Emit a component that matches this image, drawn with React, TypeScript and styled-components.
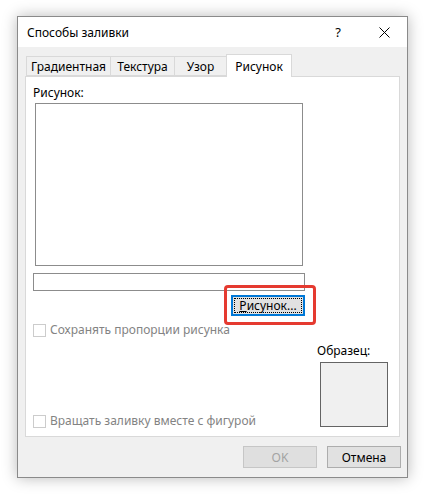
import React from "react";
import styled, { createGlobalStyle } from "styled-components";

const Global = createGlobalStyle`
  html, body { margin: 0; padding: 0; background: #ffffff; }
  body { font-family: "Noto Sans", "Open Sans", sans-serif; font-size: 11px; color: #000; }
  * { box-sizing: border-box; }
`;

const Page = styled.div`
  padding: 16px 0 0 17px;
  height: 500px;
`;

const Window = styled.div`
  width: 391px;
  height: 462px;
  border: 1px solid #8a8a8a;
  background: #f0f0f0;
  box-shadow: 0 0 14px rgba(0, 0, 0, 0.28);
  display: flex;
  flex-direction: column;
`;

const TitleBar = styled.div`
  height: 30px;
  background: #ffffff;
  display: flex;
  align-items: center;
  padding-left: 9px;
`;

const Title = styled.div`
  flex: 1;
  font-size: 12px;
`;

const TitleButton = styled.div`
  width: 46px;
  height: 30px;
  display: flex;
  align-items: center;
  justify-content: center;
  font-size: 13px;
`;

const Body = styled.div`
  flex: 1;
  display: flex;
  flex-direction: column;
  padding: 7px 7px 0 7px;
`;

const TabRow = styled.div`
  display: flex;
  align-items: flex-end;
  height: 22px;
  padding-left: 1px;
  position: relative;
  z-index: 1;
`;

const Tab = styled.div<{ $w: number; $active?: boolean }>`
  width: ${(p) => p.$w}px;
  height: ${(p) => (p.$active ? 23 : 20)}px;
  margin-bottom: ${(p) => (p.$active ? -1 : 0)}px;
  border: 1px solid #d9d9d9;
  border-bottom: ${(p) => (p.$active ? "none" : "1px solid #d9d9d9")};
  margin-left: -1px;
  background: ${(p) => (p.$active ? "#ffffff" : "#f0f0f0")};
  display: flex;
  align-items: ${(p) => (p.$active ? "flex-start" : "center")};
  padding-top: ${(p) => (p.$active ? 3 : 0)}px;
  justify-content: center;
  font-size: 12px;
  &:first-child { margin-left: 0; }
`;

const Panel = styled.div`
  height: 361px;
  border: 1px solid #d9d9d9;
  background: #ffffff;
  display: grid;
  grid-template-columns: 284px 1fr;
  padding: 8px 0 7px 7px;
`;

const LeftCol = styled.div`
  display: flex;
  flex-direction: column;
`;

const RightCol = styled.div`
  display: flex;
  flex-direction: column;
  justify-content: flex-end;
  padding-bottom: 2px;
`;

const Label = styled.div`
  font-size: 12px;
  line-height: 16px;
`;

const PictureBox = styled.div`
  margin-left: 2px;
  margin-top: 2px;
  width: 268px;
  height: 163px;
  border: 1px solid #8c8c8c;
  background: #fff;
`;

const Field = styled.div`
  margin-top: 7px;
  width: 272px;
  height: 18px;
  border: 1px solid #8c8c8c;
`;

const ButtonRow = styled.div`
  display: flex;
  justify-content: flex-start;
  padding-left: 198px;
  margin-top: 4px;
  position: relative;
`;

const Button = styled.div<{ $focused?: boolean; $disabled?: boolean }>`
  width: 74px;
  height: ${(p) => (p.$focused ? 21 : 22)}px;
  background: ${(p) => (p.$disabled ? "#dfdfdf" : "#e1e1e1")};
  border: ${(p) =>
    p.$focused ? "2px solid #0078d7" : p.$disabled ? "1px solid #c6c6c6" : "1px solid #adadad"};
  color: ${(p) => (p.$disabled ? "#a3a3a3" : "#000")};
  display: flex;
  align-items: center;
  justify-content: center;
  font-size: 12px;
  position: relative;
`;

const FocusRect = styled.div`
  position: absolute;
  inset: 1px;
  border: 1px dotted #000;
`;

const Highlight = styled.div`
  position: absolute;
  left: 191px;
  top: -10px;
  width: 92px;
  height: 40px;
  border: 3px solid #e53a30;
  border-radius: 4px;
  pointer-events: none;
`;

const CheckRow = styled.div<{ $push?: boolean }>`
  display: flex;
  align-items: center;
  gap: 4px;
  height: 14px;
  line-height: 14px;
  margin-top: ${(p) => (p.$push ? "auto" : "7px")};
  margin-bottom: ${(p) => (p.$push ? "1px" : "0")};
  color: #838383;
  font-size: 12px;
`;

const Check = styled.div`
  width: 13px;
  height: 13px;
  border: 1px solid #cccccc;
  background: #fff;
`;

const SampleLabel = styled.div`
  font-size: 12px;
  line-height: 16px;
  margin-bottom: 3px;
`;

const SampleBox = styled.div`
  margin-left: 3px;
  width: 68px;
  height: 65px;
  border: 1px solid #646464;
  background: #f0f0f0;
`;

const Footer = styled.div`
  display: flex;
  justify-content: flex-end;
  gap: 10px;
  padding-top: 9px;
  margin-right: -1px;
`;

export default function App() {
  return (
    <>
      <Global />
      <Page>
        <Window>
          <TitleBar>
            <Title>Способы заливки</Title>
            <TitleButton>?</TitleButton>
            <TitleButton>
              <svg width="11" height="11" viewBox="0 0 11 11">
                <path d="M0.5 0.5 L10.5 10.5 M10.5 0.5 L0.5 10.5" stroke="#000" strokeWidth="1" />
              </svg>
            </TitleButton>
          </TitleBar>
          <Body>
            <TabRow>
              <Tab $w={85}>Градиентная</Tab>
              <Tab $w={65}>Текстура</Tab>
              <Tab $w={53}>Узор</Tab>
              <Tab $w={66} $active>
                Рисунок
              </Tab>
            </TabRow>
            <Panel>
              <LeftCol>
                <Label>Рисунок:</Label>
                <PictureBox />
                <Field />
                <ButtonRow>
                  <Button $focused>
                    <FocusRect />
                    <span>
                      <u>Р</u>исунок...
                    </span>
                  </Button>
                  <Highlight />
                </ButtonRow>
                <CheckRow>
                  <Check />
                  Сохранять пропорции рисунка
                </CheckRow>
                <CheckRow $push>
                  <Check />
                  Вращать заливку вместе с фигурой
                </CheckRow>
              </LeftCol>
              <RightCol>
                <SampleLabel>Образец:</SampleLabel>
                <SampleBox />
              </RightCol>
            </Panel>
            <Footer>
              <Button $disabled>OK</Button>
              <Button>Отмена</Button>
            </Footer>
          </Body>
        </Window>
      </Page>
    </>
  );
}
